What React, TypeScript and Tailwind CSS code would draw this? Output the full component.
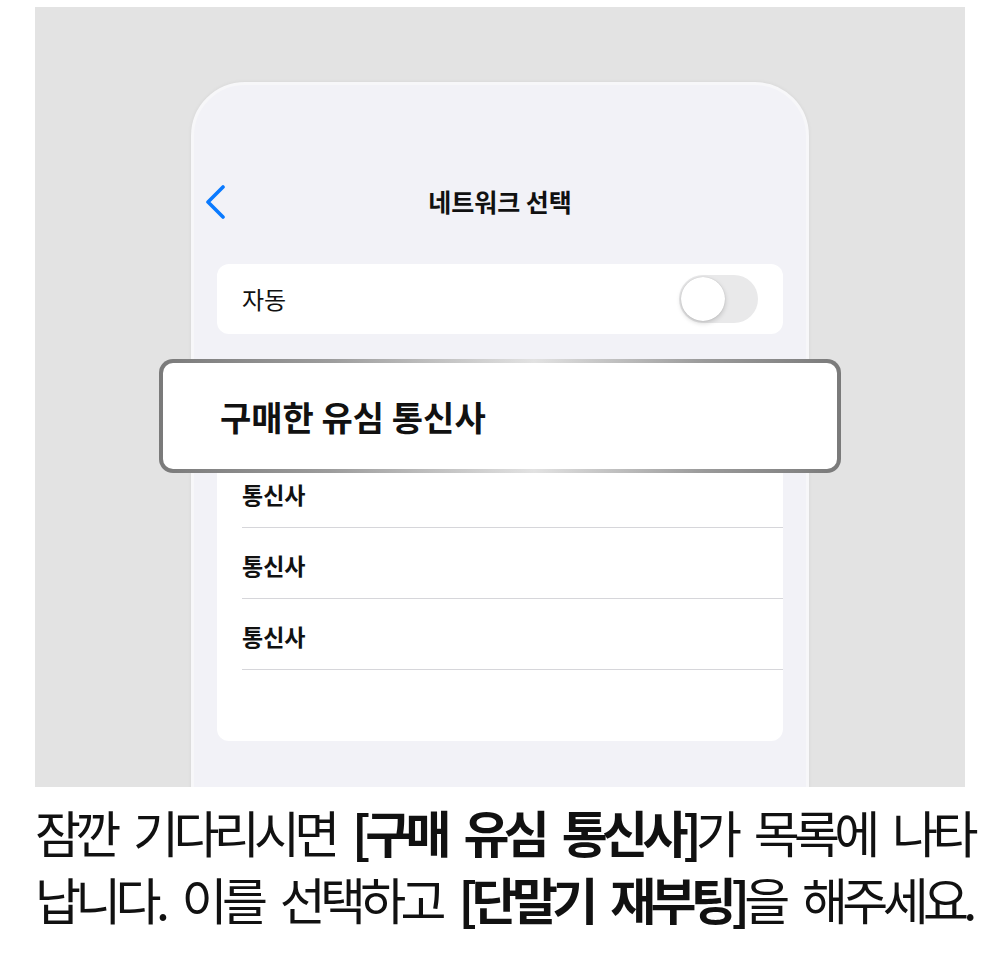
import React from 'react';

const carriers = ['통신사', '통신사', '통신사'];

const BackChevron: React.FC = () => (
  <svg width="20" height="34" viewBox="0 0 20 34" fill="none">
    <polyline
      points="17,2 2,17 17,32"
      stroke="#0a7aff"
      strokeWidth="3.6"
      strokeLinecap="round"
      strokeLinejoin="round"
    />
  </svg>
);

const Toggle: React.FC = () => (
  <div className="w-[79px] h-[48px] rounded-full bg-[#e9e9ea] p-[2px] flex items-center">
    <div className="w-[44px] h-[44px] rounded-full bg-white shadow-[0_2px_5px_rgba(0,0,0,0.18),0_0_1px_rgba(0,0,0,0.2)]" />
  </div>
);

const App: React.FC = () => {
  return (
    <div className="min-h-screen bg-white font-['Noto_Sans_CJK_KR','Noto_Sans',sans-serif] text-[#111]">
      {/* Phone preview */}
      <div className="pt-[7px] px-[35px]">
        <div className="relative h-[780px] bg-[#e3e3e3] overflow-hidden">
          <div className="ml-[156px] mt-[75px] w-[618px] h-[760px] rounded-[54px] border-[3px] border-[#f7f7f9] shadow-[0_0_4px_rgba(0,0,0,0.06)] bg-[#f2f2f7]">
            {/* Navigation bar */}
            <div className="mt-[94px] h-[46px] grid grid-cols-[1fr_auto_1fr] items-center">
              <div className="flex items-center pl-[12px]">
                <BackChevron />
              </div>
              <div className="text-[25px] font-semibold">네트워크 선택</div>
              <div />
            </div>

            <div className="px-[23px]">
              {/* Automatic selection */}
              <div className="mt-[39px] h-[70px] rounded-[12px] bg-white flex items-center justify-between pl-[25px] pr-[25px]">
                <span className="text-[24px]">자동</span>
                <Toggle />
              </div>

              {/* Carrier list; the first row sits under the callout */}
              <div className="mt-[38px] rounded-[12px] bg-white pt-[15px] pb-[71px]">
                <div className="ml-[25px] h-[70px] border-b border-[#d1d1d6]" />
                {carriers.map((name, i) => (
                  <div
                    key={i}
                    className="ml-[25px] h-[71px] flex items-center pt-[4px] border-b border-[#d6d6da] text-[23px] font-semibold"
                  >
                    {name}
                  </div>
                ))}
              </div>
            </div>
          </div>

          {/* Highlighted row callout */}
          <div className="absolute left-[124px] top-[352px] w-[682px] h-[114px] rounded-[14px] p-[4px] bg-[linear-gradient(to_right,#7a7a7a_0%,#9c9c9c_25%,#e2e2e2_55%,#9a9a9a_80%,#7a7a7a_100%)]">
            <div className="h-full rounded-[10px] bg-white flex items-center pl-[57px]">
              <span className="text-[34px] font-bold">구매한 유심 통신사</span>
            </div>
          </div>
        </div>
      </div>

      {/* Caption */}
      <div className="pl-[35px] mt-[11px] text-[50px] leading-[67px] tracking-[-5.7px] [word-spacing:12px] whitespace-nowrap text-[#111]">
        <div>
          잠깐 기다리시면 <b className="font-bold">[구매 유심 통신사]</b>가 목록에 나타
        </div>
        <div>
          납니다. 이를 선택하고 <b className="font-bold">[단말기 재부팅]</b>을 해주세요.
        </div>
      </div>
    </div>
  );
};

export default App;
